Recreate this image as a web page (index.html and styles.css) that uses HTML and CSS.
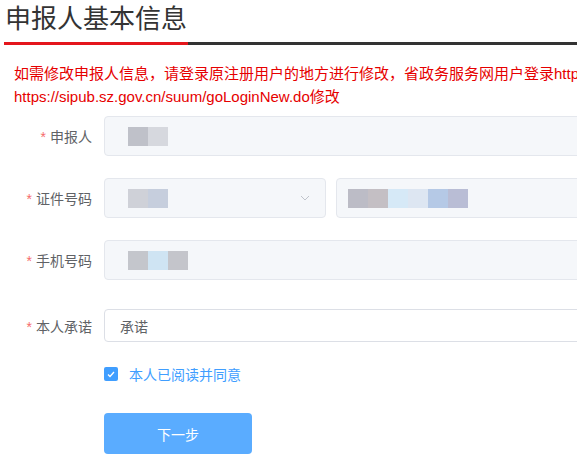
FILE: index.html
```html
<!DOCTYPE html>
<html>
<head>
  <title>申报人基本信息</title>
  <link rel="stylesheet" href="styles.css">
</head>
<body>
  <div class="title-bar">
    <h1>申报人基本信息</h1>
  </div>

  <p class="notice">如需修改申报人信息，请登录原注册用户的地方进行修改，省政务服务网用户登录http://www.gdzwfw.gov.cn，深圳用户登录<br>https://sipub.sz.gov.cn/suum/goLoginNew.do修改</p>

  <form class="form">
    <div class="form-item">
      <label class="label"><span class="star">*</span>申报人</label>
      <div class="field">
        <div class="input disabled">
          <span class="mosaic">
            <i style="background:#bfc1c9"></i><i style="background:#d6d8de"></i>
          </span>
        </div>
      </div>
    </div>

    <div class="form-item">
      <label class="label"><span class="star">*</span>证件号码</label>
      <div class="field split">
        <div class="input disabled select">
          <span class="mosaic">
            <i style="background:#cfd1d8"></i><i style="background:#c6cedd"></i>
          </span>
          <svg class="arrow" width="10" height="6" viewBox="0 0 10 6">
            <path d="M1 1l4 4 4-4" fill="none" stroke="#c0c4cc" stroke-width="1"/>
          </svg>
        </div>
        <div class="input disabled grow">
          <span class="mosaic near">
            <i style="background:#bcbcc6"></i><i style="background:#c4bfc4"></i><i style="background:#d6e9f7"></i><i style="background:#dde6f2"></i><i style="background:#b5c9e6"></i><i style="background:#b9bdd5"></i>
          </span>
        </div>
      </div>
    </div>

    <div class="form-item">
      <label class="label"><span class="star">*</span>手机号码</label>
      <div class="field">
        <div class="input disabled">
          <span class="mosaic">
            <i style="background:#c4c6cc"></i><i style="background:#cfe4f3"></i><i style="background:#c4c5cb"></i>
          </span>
        </div>
      </div>
    </div>

    <div class="form-item promise">
      <label class="label"><span class="star">*</span>本人承诺</label>
      <div class="field">
        <div class="input plain">承诺</div>
      </div>
    </div>

    <div class="agree">
      <span class="checkbox">
        <svg width="8" height="7" viewBox="0 0 8 7">
          <path d="M1 3.5l2 2 4-4.5" fill="none" stroke="#fff" stroke-width="1.3"/>
        </svg>
      </span>
      本人已阅读并同意
    </div>

    <div class="actions">
      <button type="button" class="btn">下一步</button>
    </div>
  </form>
</body>
</html>
```

FILE: styles.css
```css
body {
  font-family: "Liberation Sans", "Noto Sans CJK SC", sans-serif;
  background-color: #fff;
  margin: 0;
  padding: 0;
  overflow: hidden;
}

.title-bar {
  width: 700px;
  margin-left: 4px;
  border-bottom: 3px solid #333;
}

h1 {
  display: inline-block;
  margin: 0 0 -3px 0;
  padding: 0 1px 4px 1px;
  font-size: 26px;
  font-weight: normal;
  line-height: 38px;
  color: #333;
  border-bottom: 3px solid #e4161c;
}

.notice {
  width: 1000px;
  margin: 17px 0 0 14px;
  font-size: 15px;
  line-height: 23px;
  color: #e60000;
}

.form {
  width: 600px;
  margin-top: 8px;
}

.form-item {
  display: flex;
  align-items: center;
  height: 40px;
  margin-bottom: 22px;
}

.label {
  width: 92px;
  padding-right: 12px;
  text-align: right;
  font-size: 14px;
  color: #606266;
}

.star {
  color: #f56c6c;
  margin-right: 4px;
}

.field {
  flex: 1;
  display: flex;
  height: 100%;
}

.split {
  gap: 10px;
}

.input {
  flex: 1;
  display: flex;
  align-items: center;
  box-sizing: border-box;
  height: 100%;
  padding: 0 15px;
  border-radius: 4px;
  font-size: 14px;
  color: #606266;
}

.disabled {
  background-color: #f5f7fa;
  border: 1px solid #e4e7ed;
}

.select {
  flex: none;
  width: 222px;
  justify-content: space-between;
}

.grow {
  flex: 1;
}

.mosaic {
  display: flex;
  margin-left: 8px;
}

.mosaic.near {
  margin-left: -4px;
}

.mosaic i {
  display: block;
  width: 20px;
  height: 19px;
}

.promise {
  margin-top: 29px;
  height: 33px;
  margin-bottom: 0;
}

.plain {
  border: 1px solid #dcdfe6;
}

.agree {
  display: flex;
  align-items: center;
  margin: 22px 0 0 104px;
  font-size: 14px;
  color: #409eff;
}

.checkbox {
  display: flex;
  align-items: center;
  justify-content: center;
  width: 14px;
  height: 14px;
  margin-right: 11px;
  border-radius: 2px;
  background-color: #409eff;
}

.actions {
  margin: 29px 0 0 104px;
}

.btn {
  width: 148px;
  height: 41px;
  border: none;
  border-radius: 4px;
  background-color: #5aacff;
  color: #fff;
  font-family: "Liberation Sans", "Noto Sans CJK SC", sans-serif;
  font-size: 14px;
  cursor: pointer;
}
```
